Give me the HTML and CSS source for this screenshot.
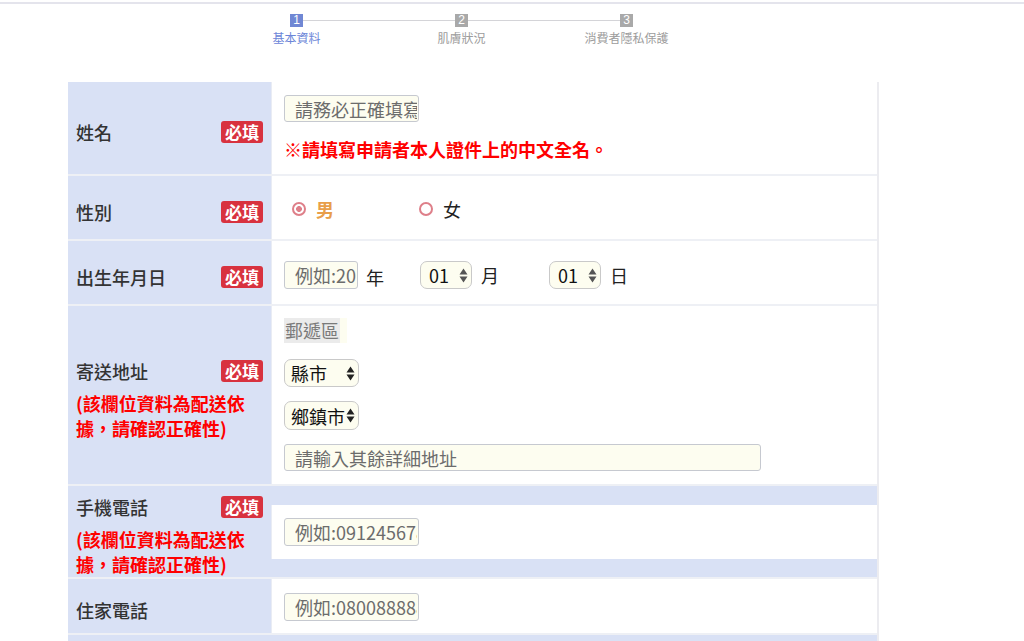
FILE: index.html
```html
<!DOCTYPE html>
<html lang="zh-Hant">
<head>
<meta charset="utf-8">
<title>基本資料</title>
<link rel="stylesheet" href="styles.css">
</head>
<body>
<div class="topline"></div>
<ol class="stepper">
  <li class="step step--active"><span class="step-num">1</span><span class="step-label">基本資料</span></li>
  <li class="step"><span class="step-num">2</span><span class="step-label">肌膚狀況</span></li>
  <li class="step step--last"><span class="step-num">3</span><span class="step-label">消費者隱私保護</span></li>
</ol>

<form class="form">
  <div class="row">
    <div class="label-cell">
      <div class="label-head"><span class="label-text">姓名</span><span class="badge">必填</span></div>
    </div>
    <div class="value-cell value-cell--name">
      <input class="field field--name" type="text" placeholder="請務必正確填寫">
      <p class="name-note">※請填寫申請者本人證件上的中文全名。</p>
    </div>
  </div>

  <div class="row">
    <div class="label-cell">
      <div class="label-head"><span class="label-text">性別</span><span class="badge">必填</span></div>
    </div>
    <div class="value-cell value-cell--gender">
      <div class="radio-group">
        <label class="radio-option radio-option--male"><input class="radio" type="radio" name="gender" checked><span>男</span></label>
        <label class="radio-option"><input class="radio" type="radio" name="gender"><span>女</span></label>
      </div>
    </div>
  </div>

  <div class="row">
    <div class="label-cell">
      <div class="label-head"><span class="label-text">出生年月日</span><span class="badge">必填</span></div>
    </div>
    <div class="value-cell value-cell--date">
      <div class="date-group date-group--year">
        <input class="field field--year" type="text" placeholder="例如:2000">
        <span class="unit unit--low">年</span>
      </div>
      <div class="date-group date-group--month">
        <span class="select-wrap">
          <select class="select select--day"><option>01</option></select>
          <svg class="select-arrows" width="9" height="15" viewBox="0 0 9 15"><path d="M0.5 6.5 L4.5 0.5 L8.5 6.5 Z M0.5 8.5 L8.5 8.5 L4.5 14.5 Z" fill="#555"/></svg>
        </span>
        <span class="unit">月</span>
      </div>
      <div class="date-group">
        <span class="select-wrap">
          <select class="select select--day"><option>01</option></select>
          <svg class="select-arrows" width="9" height="15" viewBox="0 0 9 15"><path d="M0.5 6.5 L4.5 0.5 L8.5 6.5 Z M0.5 8.5 L8.5 8.5 L4.5 14.5 Z" fill="#555"/></svg>
        </span>
        <span class="unit">日</span>
      </div>
    </div>
  </div>

  <div class="row">
    <div class="label-cell">
      <div class="label-head"><span class="label-text">寄送地址</span><span class="badge">必填</span></div>
      <p class="label-note">(該欄位資料為配送依據，請確認正確性)</p>
    </div>
    <div class="value-cell value-cell--address">
      <span class="zip"><span class="zip-text">郵遞區</span></span>
      <span class="select-wrap select-wrap--city">
        <select class="select select--city"><option>縣市</option></select>
        <svg class="select-arrows" width="9" height="15" viewBox="0 0 9 15"><path d="M0.5 6.5 L4.5 0.5 L8.5 6.5 Z M0.5 8.5 L8.5 8.5 L4.5 14.5 Z" fill="#222"/></svg>
      </span>
      <span class="select-wrap select-wrap--town">
        <select class="select select--city"><option>鄉鎮市</option></select>
        <svg class="select-arrows" width="9" height="15" viewBox="0 0 9 15"><path d="M0.5 6.5 L4.5 0.5 L8.5 6.5 Z M0.5 8.5 L8.5 8.5 L4.5 14.5 Z" fill="#222"/></svg>
      </span>
      <input class="field field--address" type="text" placeholder="請輸入其餘詳細地址">
    </div>
  </div>

  <div class="row">
    <div class="label-cell">
      <div class="label-head"><span class="label-text">手機電話</span><span class="badge">必填</span></div>
      <p class="label-note">(該欄位資料為配送依據，請確認正確性)</p>
    </div>
    <div class="value-cell value-cell--phone value-cell--center">
      <input class="field field--phone" type="text" placeholder="例如:0912456789">
    </div>
  </div>

  <div class="row">
    <div class="label-cell">
      <div class="label-head"><span class="label-text">住家電話</span></div>
    </div>
    <div class="value-cell value-cell--home">
      <input class="field field--phone" type="text" placeholder="例如:0800888888">
    </div>
  </div>

  <div class="row">
    <div class="label-cell label-cell--tall">
      <div class="label-head"><span class="label-text">電子信箱</span><span class="badge">必填</span></div>
      <p class="label-note">(該欄位資料為配送依據，請確認正確性)</p>
    </div>
    <div class="value-cell value-cell--phone value-cell--center">
      <input class="field field--address field--email" type="text" placeholder="例如:example@mail.com">
    </div>
  </div>
</form>
</body>
</html>
```

FILE: styles.css
```css
html, body {
  margin: 0;
  padding: 0;
  background: #ffffff;
}

body {
  font-family: "Noto Sans CJK TC", "Noto Sans", "Liberation Sans", sans-serif;
  color: #333333;
}

.topline {
  margin-top: 2px;
  height: 2px;
  background: #e4e4ec;
}

/* ---------- stepper ---------- */
.stepper {
  list-style: none;
  margin: 10px 0 0 214px;
  padding: 0;
  display: grid;
  grid-template-columns: repeat(3, 165px);
}

.step {
  position: relative;
  display: flex;
  flex-direction: column;
  align-items: center;
}

.step::after {
  content: "";
  position: absolute;
  top: 6px;
  left: calc(50% + 6.5px);
  width: 152px;
  height: 1px;
  background: #d4d4d8;
}

.step--last::after {
  display: none;
}

.step-num {
  width: 13px;
  height: 13px;
  background: #a9a9a9;
  color: #ffffff;
  font: 12px/13px "Liberation Sans", sans-serif;
  text-align: center;
}

.step--active .step-num {
  background: #7087d4;
}

.step-label {
  margin-top: 3px;
  font-size: 12px;
  line-height: 16px;
  color: #9c9c9c;
  white-space: nowrap;
}

.step--active .step-label {
  color: #6c86d8;
}

/* ---------- form table ---------- */
.form {
  width: 809px;
  margin: 36px 0 0 68px;
  border-right: 2px solid #ececf0;
}

.row {
  display: flex;
  background: #d9e1f5;
  border-bottom: 2px solid #eef0f5;
}

.label-cell {
  width: 203px;
  flex-shrink: 0;
  box-sizing: border-box;
  padding: 8px 8px 0 8px;
  display: flex;
  flex-direction: column;
  justify-content: center;
}

.label-cell--tall {
  padding-top: 10px;
}

.label-head {
  display: flex;
  align-items: center;
  justify-content: space-between;
  height: 26px;
}

.label-text {
  font-size: 18px;
  font-weight: 500;
  line-height: 26px;
  color: #333333;
}

.badge {
  background: #d8323f;
  color: #ffffff;
  font-size: 17px;
  font-weight: bold;
  line-height: 22px;
  padding: 0 4px;
  border-radius: 3px;
}

.label-note {
  margin: 7px 0 0 0;
  color: #ff0000;
  font-size: 18px;
  font-weight: bold;
  line-height: 25px;
}

.value-cell {
  flex: 1;
  background: #ffffff;
  border-left: 1px solid #e9ecf4;
  padding: 0 12px;
}

.value-cell--center {
  align-self: center;
}

.value-cell--name {
  padding-top: 13px;
  padding-bottom: 12px;
}

.name-note {
  margin: 14px 0 0 0;
  color: #ff0000;
  font-size: 18px;
  font-weight: bold;
  line-height: 26px;
}

.value-cell--gender {
  padding-top: 20px;
  padding-bottom: 17px;
}

.value-cell--date {
  display: flex;
  align-items: center;
  padding-top: 20px;
  padding-bottom: 15px;
}

.value-cell--address {
  display: flex;
  flex-direction: column;
  align-items: flex-start;
  padding-top: 12px;
  padding-bottom: 13px;
}

.value-cell--phone {
  padding-top: 13px;
  padding-bottom: 13px;
}

.value-cell--home {
  padding-top: 14px;
  padding-bottom: 12px;
}

/* ---------- fields ---------- */
.field {
  box-sizing: border-box;
  height: 27px;
  border: 1px solid #c6c9d0;
  border-radius: 3px;
  background: #fdfdf0;
  font-family: "Noto Sans CJK TC", "Noto Sans", sans-serif;
  font-size: 18px;
  color: #333333;
  padding: 0 1px 0 10px;
  margin: 0;
  display: block;
}

.field::placeholder {
  color: #6c6c6c;
}

.field--name {
  width: 135px;
}

.field--year {
  width: 74px;
  height: 28px;
}

.field--phone {
  width: 135px;
  height: 28px;
}

.field--address {
  width: 477px;
  margin-top: 14px;
}

.field--email {
  margin-top: 0;
}

/* radios */
.radio-group {
  display: flex;
  padding-left: 8px;
}

.radio-option {
  display: flex;
  align-items: center;
  gap: 10px;
  width: 127px;
  font-size: 18px;
  line-height: 26px;
  color: #222222;
}

.radio-option--male {
  color: #e89e4a;
  font-weight: bold;
}

.radio {
  appearance: none;
  -webkit-appearance: none;
  box-sizing: border-box;
  width: 14px;
  height: 14px;
  margin: 0;
  border: 2px solid #de7f89;
  border-radius: 50%;
  background: #ffffff;
}

.radio:checked {
  background: radial-gradient(circle, #de7f89 0 2.6px, #ffffff 3.2px);
}

/* dates */
.date-group {
  display: flex;
  align-items: center;
  gap: 9px;
}

.date-group--year {
  align-items: flex-end;
  gap: 8px;
  margin-right: 36px;
}

.date-group--month {
  margin-right: 50px;
}

.unit {
  font-size: 18px;
  line-height: 26px;
  color: #222222;
}

.unit--low {
  line-height: 24px;
}

/* selects */
.select-wrap {
  position: relative;
  display: inline-flex;
}

.select {
  appearance: none;
  -webkit-appearance: none;
  box-sizing: border-box;
  height: 28px;
  margin: 0;
  border: 1px solid #c9c9c9;
  border-radius: 7px;
  background: #fdfdf0;
  font-family: "Noto Sans CJK TC", "Noto Sans", sans-serif;
  font-size: 18px;
  color: #111111;
  padding: 0 0 0 8px;
}

.select--day {
  width: 52px;
}

.select--city {
  width: 75px;
  padding-left: 6px;
}

.select-arrows {
  position: absolute;
  right: 4px;
  top: 50%;
  margin-top: -7.5px;
  pointer-events: none;
}

.select-wrap--city {
  margin-top: 16px;
}

.select-wrap--town {
  margin-top: 14px;
}

.select-wrap--town .select {
  height: 29px;
}

.zip {
  display: inline-block;
  background: #fdfdf0;
  padding-right: 7px;
}

.zip-text {
  display: block;
  background: #ebebeb;
  color: #7a7a7a;
  font-size: 18px;
  line-height: 25px;
  padding: 0 1px;
}
```
